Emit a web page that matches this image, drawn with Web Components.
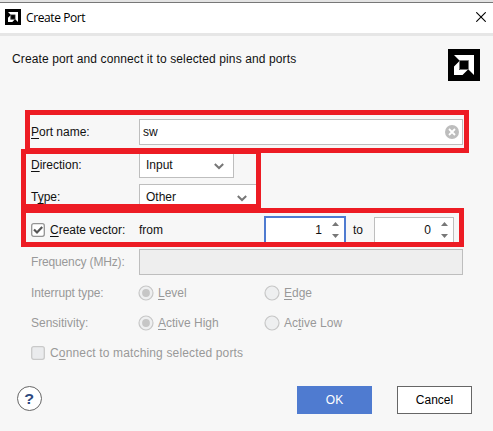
<!DOCTYPE html>
<html lang="en"><head><meta charset="utf-8"><title>Create Port</title>
<style>
html,body{margin:0;height:100%;overflow:hidden;background:#f7f7f7}
body{font:12px/16px "Liberation Sans",Arial,sans-serif;color:#111}
u{text-decoration:underline;text-underline-offset:2px;text-decoration-thickness:1px;text-decoration-skip-ink:none}
</style></head><body>
<port-dialog></port-dialog>
<script>
const U='u{text-decoration:underline;text-underline-offset:2px;text-decoration-thickness:1px;text-decoration-skip-ink:none}';
function define(name,css,html){
  customElements.define(name,class extends HTMLElement{
    constructor(){super();this.attachShadow({mode:'open'}).innerHTML=`<style>*{box-sizing:border-box}${U}${css}</style>${typeof html==='function'?html(this):html}`;}
  });
}
define('brand-logo',':host{display:block;width:var(--s,32px);height:var(--s,32px)}svg{display:block;width:100%;height:100%}',
 '<svg viewBox="0 0 32 32"><path fill="#000" d="M0 0h32v32H0z"/><path fill="#fff" d="M6 6h20v20l-5.500-5.500V11.500H11.500zM6 17.500l5-5V21h8.500l-5 5H6z"/><path fill="none" stroke="#777" d="M11.500 11.500h9v9h-9z"/></svg>');
define('title-bar',`:host{display:flex;align-items:center;height:36px;padding:0 7px 3px 5px;border-top:2px solid #e3e3e3;border-bottom:3px solid #e6e6e6;background:#fff;box-shadow:inset 0 1px #777;font:12px/16px "Open Sans","Noto Sans",sans-serif;color:#000}
 brand-logo{--s:16px;margin:1px 5px 0 0}span{flex:1;letter-spacing:-.4px;padding-top:3px}svg{width:10px;height:10px;margin-top:2px}`,
 '<brand-logo></brand-logo><span>Create Port</span><svg viewBox="0 0 10 10"><path d="M.3.3l9.400 9.400M9.700.3L.3 9.700" fill="none" stroke="#000" stroke-width="1.100"/></svg>');
define('form-row',`:host{display:flex;align-items:center;height:26px;white-space:nowrap}:host([disabled]){color:#999}
 .l{width:108px;display:flex;align-items:center;flex:none}`,'<div class="l"><slot name="label"></slot></div><slot></slot>');
define('text-field',`:host{display:flex;align-items:center;justify-content:space-between;box-sizing:border-box;width:324px;height:26px;border:1px solid #bebebe;background:#fff;padding:0 3px 0 3px}
 :host([disabled]){background:#eee}:host([disabled]) svg{display:none}svg{width:14px;height:14px}`,
 '<slot></slot><svg viewBox="0 0 14 14"><circle cx="7" cy="7" r="7" fill="#bdbdbd"/><path d="M4 4l6 6M10 4l-6 6" stroke="#fff" stroke-width="1.800"/></svg>');
define('select-box',':host{display:flex;align-items:center;justify-content:space-between;box-sizing:border-box;width:var(--w);height:26px;border:1px solid #bebebe;background:#fff;padding:0 9px 0 6px}svg{width:10px;height:7px;margin-top:3px}',
 '<slot></slot><svg viewBox="0 0 10 7"><path d="M.8 1L5 5l4.200-4" fill="none" stroke="#777" stroke-width="2"/></svg>');
define('number-spinner',`:host{display:flex;align-items:center;justify-content:flex-end;box-sizing:border-box;width:80px;height:26px;border:1px solid #bebebe;background:#fff;padding:0 5px 0 0;gap:10px}
 :host([active]){width:82px;height:28px;border:2px solid #4f7bd0;padding-right:5px}svg{width:7px;height:16px}`,
 '<slot></slot><svg viewBox="0 0 7 16"><path fill="#777" d="M0 4L3.500 0 7 4zM0 12h7l-3.500 4z"/></svg>');
define('check-box',':host{display:flex;align-items:center;gap:5px}svg{width:14px;height:14px;flex:none}.c{display:none}:host([checked]) .c{display:block}',
 e=>`<svg viewBox="0 0 14 14"><rect x=".7" y=".7" width="12.600" height="12.600" rx="2" fill="${e.hasAttribute('checked')?'#fff':'#eaebed'}" stroke="${e.hasAttribute('checked')?'#949494':'#c9c9c9'}" stroke-width="1.300"/><path class="c" d="M3 6.500l3 3L11.200 4" fill="none" stroke="#555" stroke-width="2.200"/></svg><span><slot></slot></span>`);
define('radio-option',':host{display:flex;align-items:center;gap:4px;width:var(--w,126px)}svg{width:16px;height:16px;margin-left:-1px;flex:none}.d{display:none}:host([checked]) .d{display:block}',
 '<svg viewBox="0 0 16 16"><circle cx="8" cy="8" r="7" fill="#eeeff0" stroke="#c7c7c7" stroke-width="1.200"/><circle class="d" cx="8" cy="8" r="3.900" fill="#c6c6c6"/></svg><span><slot></slot></span>');
define('push-button',':host{display:flex;align-items:center;justify-content:center;box-sizing:border-box;width:75px;height:28px;border:1px solid #666;background:#fff;color:#000}:host([primary]){background:#4f7bd0;border-color:#4f7bd0;color:#fff}','<slot></slot>');
define('help-button',':host{display:grid;place-items:center;box-sizing:border-box;width:25px;height:25px;border:1px solid #666;border-radius:50%;background:#fff;color:#2e4a80;font:bold 14px/20px "Liberation Sans",sans-serif}span{transform:scaleX(1.150)}','<span><slot></slot></span>');
define('highlight-frame',':host{position:absolute;box-sizing:border-box;border:5px solid #ed1c24;pointer-events:none}','');
define('port-dialog',`:host{display:block;position:relative;width:493px;height:431px;background:#f7f7f7;overflow:hidden}
 header{display:flex;justify-content:space-between;height:83px;padding:13px 13px 0 12px}header span{padding-top:2px;letter-spacing:.115px}
 form-row{margin-left:31px}
 .t{margin-top:7px}.s{margin-top:6px}.r{height:30px}
 footer{display:flex;align-items:center;height:28px;padding:0 21px 0 17px;margin-top:18px}footer help-button{margin-right:auto;margin-top:-3px}footer push-button+push-button{margin-left:25px}
 .from{width:125px}.to{width:28px;padding-left:7px}`,
 `<title-bar></title-bar>
 <header><span>Create port and connect it to selected pins and ports</span><brand-logo></brand-logo></header>
 <form-row><span slot="label"><u>P</u>ort name:</span><text-field>sw</text-field></form-row>
 <form-row class="t"><span slot="label"><u>D</u>irection:</span><select-box style="--w:95px">Input</select-box></form-row>
 <form-row class="s"><span slot="label">T<u>y</u>pe:</span><select-box style="--w:118px">Other</select-box></form-row>
 <form-row class="t"><check-box slot="label" checked><u>C</u>reate vector:</check-box><span class="from">from</span><number-spinner active>1</number-spinner><span class="to">to</span><number-spinner>0</number-spinner></form-row>
 <form-row class="s" disabled><span slot="label" style="letter-spacing:-.15px">Frequency (MHz):</span><text-field disabled></text-field></form-row>
 <form-row class="r" style="margin-top:3px" disabled><span slot="label" style="letter-spacing:-.1px">Interrupt type:</span><radio-option checked><u>L</u>evel</radio-option><radio-option><u>E</u>dge</radio-option></form-row>
 <form-row class="r" disabled><span slot="label">Sensitivity:</span><radio-option checked><u>A</u>ctive High</radio-option><radio-option>Ac<u>t</u>ive Low</radio-option></form-row>
 <form-row class="r" disabled><check-box slot="label" style="letter-spacing:.15px">C<u>o</u>nnect to matching selected ports</check-box></form-row>
 <footer><help-button>?</help-button><push-button primary>OK</push-button><push-button>Cancel</push-button></footer>
 <highlight-frame style="left:25px;top:110px;width:444px;height:43px"></highlight-frame>
 <highlight-frame style="left:21px;top:149px;width:240px;height:60px"></highlight-frame>
 <highlight-frame style="left:21px;top:208px;width:443px;height:39px"></highlight-frame>`);
</script></body></html>
